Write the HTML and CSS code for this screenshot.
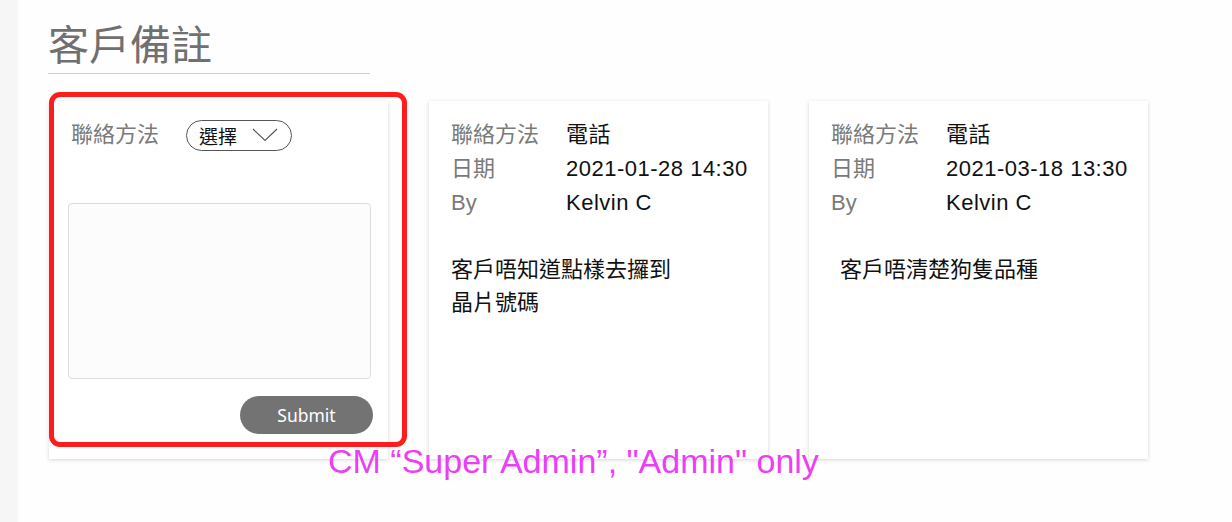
FILE: index.html
```html
<!DOCTYPE html>
<html lang="zh-Hant">
<head>
  <meta charset="UTF-8" />
  <meta name="viewport" content="width=device-width, initial-scale=1.0"/>
  <title>客戶備註</title>
  <link rel="stylesheet" href="styles.css">
</head>
<body>
  <div class="sidebar"></div>

  <div class="main">
    <h1 class="page-title">客戶備註</h1>

    <div class="cards">
      <!-- New remark form -->
      <form class="card">
        <div class="info-row">
          <span class="label">聯絡方法</span>
          <button type="button" class="select-pill">
            <span>選擇</span>
            <svg width="26" height="14" viewBox="0 0 26 14">
              <polyline points="1,1 13,12.5 25,1" fill="none" stroke="#555" stroke-width="1.1"/>
            </svg>
          </button>
        </div>
        <textarea class="remark-input"></textarea>
        <div class="form-actions">
          <button type="submit" class="submit-btn">Submit</button>
        </div>
      </form>

      <div class="card">
        <div class="info-row"><span class="label">聯絡方法</span><span class="value">電話</span></div>
        <div class="info-row"><span class="label">日期</span><span class="value">2021-01-28 14:30</span></div>
        <div class="info-row"><span class="label">By</span><span class="value">Kelvin C</span></div>
        <p class="note">客戶唔知道點樣去攞到<br>晶片號碼</p>
      </div>

      <div class="card">
        <div class="info-row"><span class="label">聯絡方法</span><span class="value">電話</span></div>
        <div class="info-row"><span class="label">日期</span><span class="value">2021-03-18 13:30</span></div>
        <div class="info-row"><span class="label">By</span><span class="value">Kelvin C</span></div>
        <p class="note note-indent">客戶唔清楚狗隻品種</p>
      </div>
    </div>

    <!-- spec annotations -->
    <div class="highlight-box"></div>
    <div class="annotation">CM “Super Admin”, "Admin" only</div>
  </div>
</body>
</html>
```

FILE: styles.css
```css
* {
  box-sizing: border-box;
}

body {
  margin: 0;
  display: flex;
  min-height: 100vh;
  background: #fefefe;
  font-family: 'Liberation Sans', 'Noto Sans CJK TC', sans-serif;
}

.sidebar {
  width: 17px;
  background: #f6f6f6;
  box-shadow: 1px 0 2px rgba(0, 0, 0, 0.04);
}

.main {
  flex: 1;
  position: relative;
  padding-left: 31px;
}

.page-title {
  width: 322px;
  margin: 0;
  padding: 18px 0 7px;
  font-family: 'Noto Sans CJK TC', sans-serif;
  font-size: 41px;
  font-weight: 400;
  line-height: 48px;
  color: #707070;
  border-bottom: 1px solid #cfcfcf;
}

.cards {
  display: flex;
  gap: 41px;
  margin: 27px 0 0 1px;
}

.card {
  width: 339px;
  height: 358px;
  margin: 0;
  padding: 17px 18px 0 22px;
  background: #fff;
  box-shadow: 0 1px 4px rgba(0, 0, 0, 0.16);
}

.info-row {
  display: flex;
  align-items: center;
  height: 34px;
  font-size: 22px;
  line-height: 34px;
}

.label {
  width: 115px;
  flex-shrink: 0;
  color: #7a7a7a;
}

.value {
  color: #111;
  letter-spacing: 0.5px;
}

.select-pill {
  display: flex;
  align-items: center;
  gap: 15px;
  width: 106px;
  height: 31px;
  padding: 0 0 0 12px;
  border: 1px solid #555;
  border-radius: 16px;
  background: #fff;
  font-family: 'Noto Sans CJK TC', sans-serif;
  font-size: 19px;
  line-height: 29px;
  color: #111;
}

.remark-input {
  display: block;
  width: 303px;
  height: 176px;
  margin: 51px 0 0 -3px;
  border: 1px solid #dcdcdc;
  border-radius: 4px;
  background: #fcfcfc;
  resize: none;
}

.form-actions {
  display: flex;
  justify-content: flex-end;
  margin: 17px -3px 0 0;
}

.submit-btn {
  width: 133px;
  height: 38px;
  border: none;
  border-radius: 19px;
  background: #737373;
  color: #fff;
  font-family: 'Noto Sans', sans-serif;
  font-size: 17.5px;
  cursor: pointer;
}

.note {
  margin: 31px 0 0;
  font-family: 'Noto Sans CJK TC', sans-serif;
  font-size: 22px;
  line-height: 33px;
  color: #111;
}

.note-indent {
  padding-left: 9px;
}

.highlight-box {
  position: absolute;
  left: 32px;
  top: 92px;
  width: 358px;
  height: 355px;
  border: 5px solid #ff1c1c;
  border-radius: 11px;
}

.annotation {
  position: absolute;
  left: 311px;
  top: 444px;
  font-size: 34px;
  line-height: 34px;
  color: #eb3ff5;
  white-space: nowrap;
}
```
